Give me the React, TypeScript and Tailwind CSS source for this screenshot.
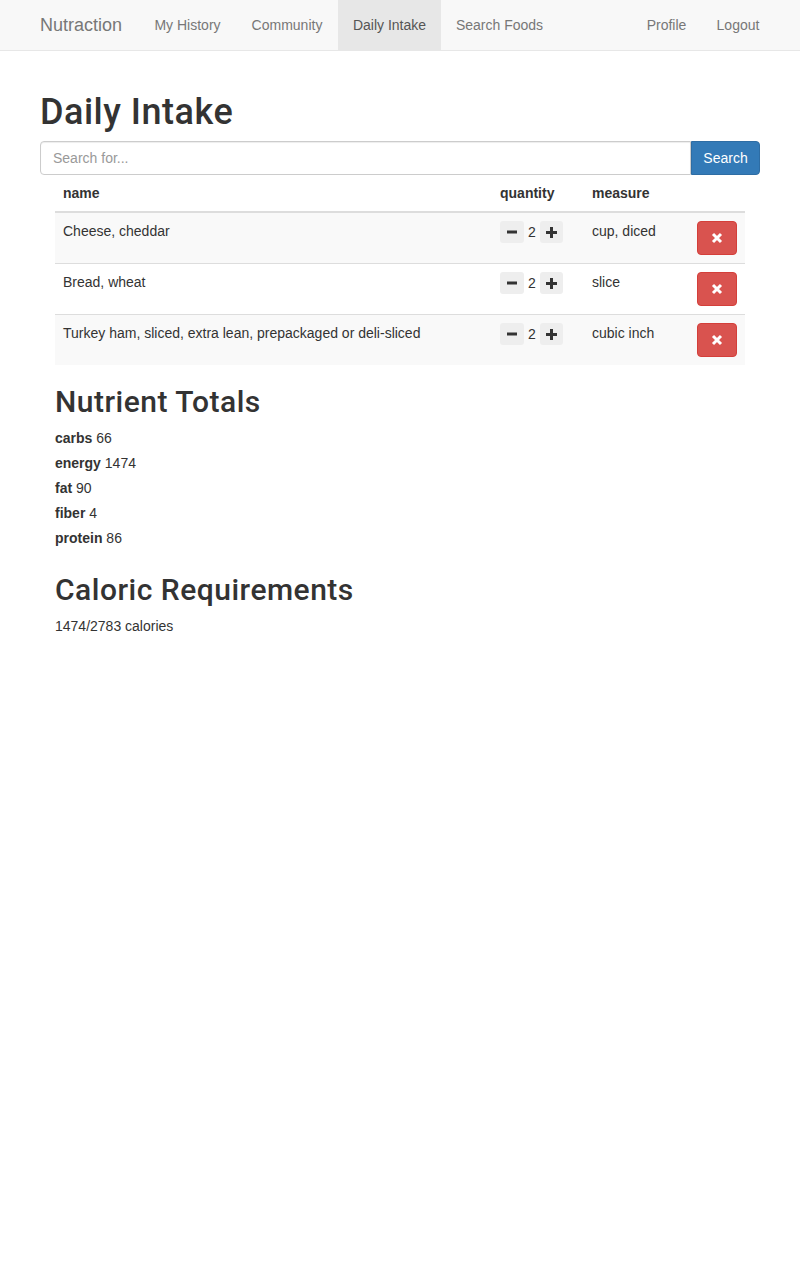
import React from "react";

const foods = [
  { name: "Cheese, cheddar", qty: 2, measure: "cup, diced" },
  { name: "Bread, wheat", qty: 2, measure: "slice" },
  { name: "Turkey ham, sliced, extra lean, prepackaged or deli-sliced", qty: 2, measure: "cubic inch" },
];

const nutrients = [
  { label: "carbs", value: 66 },
  { label: "energy", value: 1474 },
  { label: "fat", value: 90 },
  { label: "fiber", value: 4 },
  { label: "protein", value: 86 },
];

function MinusIcon() {
  return (
    <svg width="10" height="10" viewBox="0 0 10 10">
      <rect x="0" y="3.5" width="10" height="3" fill="#333" />
    </svg>
  );
}

function PlusIcon() {
  return (
    <svg width="11" height="11" viewBox="0 0 11 11">
      <rect x="0" y="4" width="11" height="3" fill="#333" />
      <rect x="4" y="0" width="3" height="11" fill="#333" />
    </svg>
  );
}

function RemoveIcon() {
  return (
    <svg width="12" height="12" viewBox="0 0 12 12">
      <path d="M2 2 L10 10 M10 2 L2 10" stroke="#fff" strokeWidth="3" strokeLinecap="butt" />
    </svg>
  );
}

const heading = { fontFamily: 'Roboto, "Liberation Sans", Arial, sans-serif' };

export default function App() {
  return (
    <div className="min-h-screen bg-white text-[14px] leading-[20px] text-[#333]" style={{ fontFamily: '"Liberation Sans", Arial, sans-serif' }}>
      {/* Navbar */}
      <nav className="h-[51px] border-b border-[#e7e7e7] bg-[#f8f8f8]">
        <div className="flex h-[50px] px-[25px]">
          <a className="block w-[114px] px-[15px] py-[15px] text-[18px] leading-[20px] text-[#777]">Nutraction</a>
          <ul className="flex">
            <li className="w-[97px] py-[15px] text-center text-[#777]">My History</li>
            <li className="w-[102px] py-[15px] text-center text-[#777]">Community</li>
            <li className="w-[103px] bg-[#e7e7e7] py-[15px] text-center text-[#555]">Daily Intake</li>
            <li className="w-[117px] py-[15px] text-center text-[#777]">Search Foods</li>
          </ul>
          <ul className="ml-auto flex">
            <li className="w-[69px] py-[15px] text-center text-[#777]">Profile</li>
            <li className="w-[74px] py-[15px] text-center text-[#777]">Logout</li>
          </ul>
        </div>
      </nav>

      <main className="mx-auto w-[750px] px-[15px] pt-[21px]">
        <h1 className="mt-[20px] mb-[9px] text-[36px] leading-[40px] font-medium tracking-[0.5px]" style={heading}>Daily Intake</h1>

        {/* Search */}
        <div className="flex h-[34px]">
          <input
            placeholder="Search for..."
            className="h-[34px] flex-1 rounded-l-[4px] border border-[#ccc] px-[12px] text-[14px] text-[#555] shadow-[inset_0_1px_1px_rgba(0,0,0,0.075)] outline-none placeholder:text-[#999]"
          />
          <button className="h-[34px] w-[69px] rounded-r-[4px] border border-[#2e6da4] bg-[#337ab7] text-[14px] text-white">
            Search
          </button>
        </div>

        <div className="mx-[15px]">
          <table className="mb-[20px] w-full border-collapse">
            <thead>
              <tr className="border-b-2 border-[#ddd]">
                <th className="p-[8px] text-left font-bold">name</th>
                <th className="w-[92px] p-[8px] text-left font-bold">quantity</th>
                <th className="w-[105px] p-[8px] text-left font-bold">measure</th>
                <th className="w-[56px] p-[8px]"></th>
              </tr>
            </thead>
            <tbody>
              {foods.map((f, i) => (
                <tr key={f.name} className={`border-t border-[#ddd] ${i % 2 === 0 ? "bg-[#f9f9f9]" : "bg-white"}`}>
                  <td className="p-[8px] align-top">{f.name}</td>
                  <td className="p-[8px] align-top">
                    <div className="flex items-center">
                      <span className="flex h-[22px] w-[24px] items-center justify-center rounded-[3px] bg-[#eee]">
                        <MinusIcon />
                      </span>
                      <span className="mx-[4px]">{f.qty}</span>
                      <span className="flex h-[22px] w-[23px] items-center justify-center rounded-[3px] bg-[#eee]">
                        <PlusIcon />
                      </span>
                    </div>
                  </td>
                  <td className="p-[8px] align-top">{f.measure}</td>
                  <td className="p-[8px] align-top">
                    <button className="flex h-[34px] w-[40px] items-center justify-center rounded-[4px] border border-[#d43f3a] bg-[#d9534f]">
                      <RemoveIcon />
                    </button>
                  </td>
                </tr>
              ))}
            </tbody>
          </table>

          <h2 className="mt-[20px] mb-[10px] text-[30px] leading-[33px] font-medium tracking-[0.5px]" style={heading}>Nutrient Totals</h2>
          <div className="flex flex-col gap-[5px]">
            {nutrients.map((n) => (
              <div key={n.label}>
                <b>{n.label}</b> {n.value}
              </div>
            ))}
          </div>

          <h2 className="mt-[25px] mb-[10px] text-[30px] leading-[33px] font-medium tracking-[0.5px]" style={heading}>Caloric Requirements</h2>
          <p>1474/2783 calories</p>
        </div>
      </main>
    </div>
  );
}
